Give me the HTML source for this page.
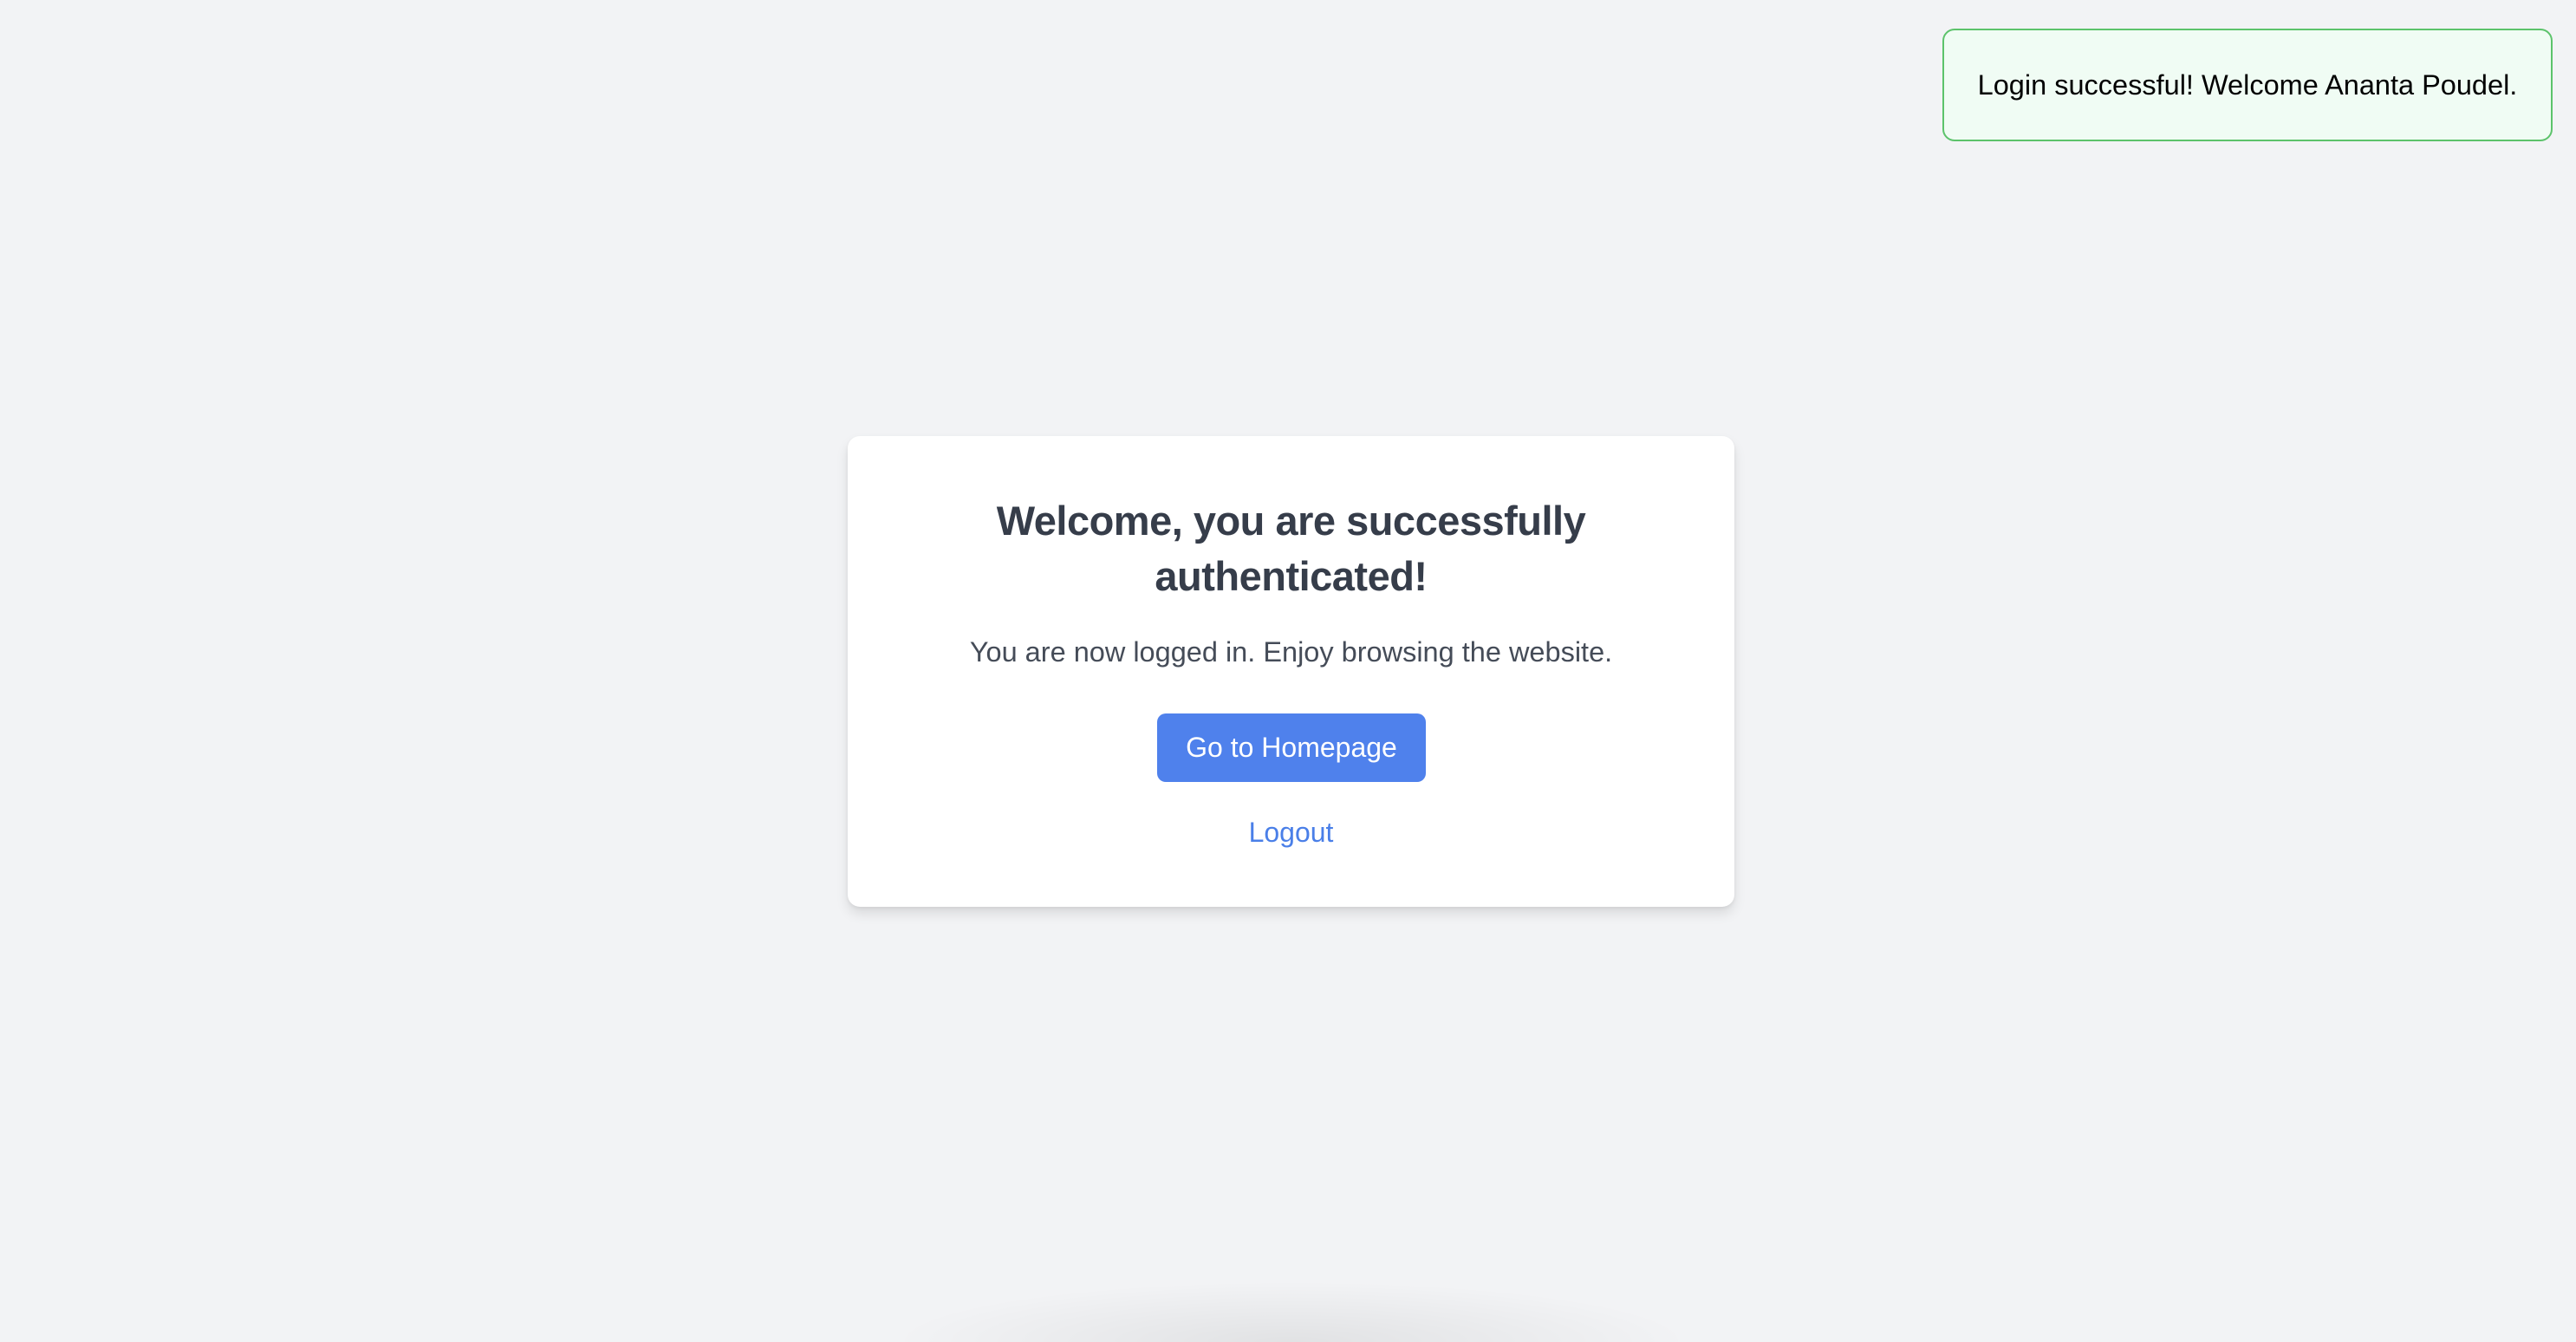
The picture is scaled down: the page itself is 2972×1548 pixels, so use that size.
<!DOCTYPE html>
<html><head><meta charset="utf-8"><style>
html,body{margin:0;padding:0;width:2972px;height:1548px;overflow:hidden;background:#f2f3f5;font-family:"Liberation Sans",sans-serif;position:relative;}
.card{position:absolute;left:978px;top:503px;width:1023px;height:543px;background:#fff;border-radius:14px;box-shadow:0 8px 14px rgba(0,0,0,0.10),0 2px 4px rgba(0,0,0,0.06);text-align:center;}
h1{position:absolute;left:0;right:0;top:66px;margin:0;font-size:47px;line-height:64px;font-weight:bold;color:#363d4a;letter-spacing:-0.5px;}
p{position:absolute;left:0;right:0;top:229px;margin:0;font-size:32.5px;line-height:40px;color:#454c58;}
.btn{position:absolute;left:357px;top:320px;width:310px;height:79px;background:#4f81ec;border-radius:10px;color:#fff;font-size:32px;line-height:79px;}
.lo{position:absolute;left:0;right:0;top:437px;font-size:32px;line-height:40px;color:#4a7fe8;}
.toast{position:absolute;left:2241px;top:33px;width:704px;height:130px;box-sizing:border-box;border:2px solid #5cc36b;background:#f0fcf4;border-radius:14px;font-size:32.5px;line-height:126px;text-align:center;color:#000;}
.blob{position:absolute;left:1030px;bottom:0;width:920px;height:70px;background:radial-gradient(ellipse 50% 100% at 50% 100%,rgba(0,0,0,0.07),rgba(0,0,0,0) 100%);}
</style></head><body>
<div class="card">
<h1>Welcome, you are successfully<br>authenticated!</h1>
<p>You are now logged in. Enjoy browsing the website.</p>
<div class="btn">Go to Homepage</div>
<div class="lo">Logout</div>
</div>
<div class="toast">Login successful! Welcome Ananta Poudel.</div>
<div class="blob"></div>
</body></html>
